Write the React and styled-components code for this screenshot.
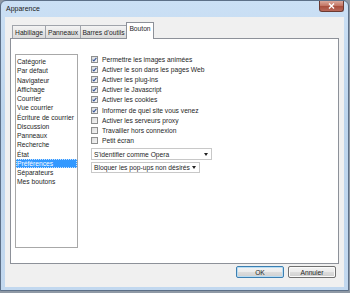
import React from "react";
import styled, { createGlobalStyle, css } from "styled-components";

const Global = createGlobalStyle`
  html, body { margin: 0; padding: 0; }
  body {
    width: 350px; height: 293px; overflow: hidden;
    background: #8f99a5;
    font-family: "Liberation Sans", Arial, sans-serif;
    font-size: 6.7px;
    color: #262626;
  }
`;

const Window = styled.div`
  width: 347px;
  height: 289px;
  border: 1px solid #5d7088;
  border-radius: 6px 6px 0 0;
  background: linear-gradient(180deg, #cbe0f5 0%, #bcd4ec 40%, #c2d8ef 100%);
  display: flex;
  flex-direction: column;
`;

const TitleBar = styled.div`
  height: 16px;
  display: flex;
  align-items: flex-start;
  justify-content: space-between;
  padding-left: 5px;
`;

const Title = styled.span`
  line-height: 16px;
  font-size: 7px;
  color: #1a1a1a;
`;

const CloseBtn = styled.div`
  width: 25px;
  height: 11px;
  margin-right: 4px;
  border: 1px solid #6b3a32;
  border-top: none;
  border-radius: 0 0 3px 3px;
  background: linear-gradient(180deg, #dba99c 0%, #c47767 45%, #a9503f 55%, #b9685a 100%);
  display: flex;
  align-items: center;
  justify-content: center;
  box-sizing: border-box;
`;

const Client = styled.div`
  flex: 1;
  margin: 0 4px 3px 4px;
  background: #f0f0f0;
  display: flex;
  flex-direction: column;
`;

const TabStrip = styled.div`
  display: flex;
  align-items: flex-end;
  height: 16px;
  margin-top: 5px;
  padding-left: 7px;
`;

const Tab = styled.div`
  box-sizing: border-box;
  height: 13px;
  border: 1px solid #a0a4ab;
  border-bottom: none;
  border-right: none;
  background: linear-gradient(180deg, #f4f4f4 0%, #e6e6e6 50%, #dadada 100%);
  display: flex;
  align-items: center;
  justify-content: center;
  white-space: nowrap;
  width: ${(p) => p.$w}px;
  ${(p) =>
    p.$active &&
    css`
      height: 17px;
      margin-bottom: -1px;
      background: #fff;
      border-right: 1px solid #8d9199;
      border-color: #8d9199;
      z-index: 1;
      align-items: flex-start;
      padding-top: 2px;
    `}
`;

const Panel = styled.div`
  margin: 0 5px;
  height: 226px;
  box-sizing: border-box;
  border: 1px solid #8d9199;
  background: #fff;
  padding: 15px 4px;
  display: flex;
  gap: 13px;
`;

const ListBox = styled.div`
  width: 63px;
  height: 194px;
  box-sizing: border-box;
  border: 1px solid #a8a8a8;
  padding: 2px 0 0 0;
`;

const ListItem = styled.div`
  height: 9.25px;
  line-height: 9.25px;
  padding-left: 1px;
  white-space: nowrap;
  box-sizing: border-box;
  ${(p) =>
    p.$selected &&
    css`
      background: #3399ff;
      color: #fff;
      outline: 1px dotted #c9e2ff;
      outline-offset: -1px;
    `}
`;

const Options = styled.div`
  display: flex;
  flex-direction: column;
`;

const CheckRow = styled.label`
  height: 10.2px;
  display: flex;
  align-items: center;
  gap: 4px;
  white-space: nowrap;
`;

const Box = styled.span`
  width: 7px;
  height: 7px;
  box-sizing: border-box;
  border: 1px solid #8e8f8f;
  background: linear-gradient(135deg, #dcdcdc 0%, #f4f4f4 100%);
  display: flex;
  align-items: center;
  justify-content: center;
`;

const Select = styled.div`
  box-sizing: border-box;
  width: ${(p) => p.$w}px;
  height: ${(p) => p.$h}px;
  margin-top: ${(p) => p.$mt}px;
  border: 1px solid #c8c8c8;
  display: flex;
  align-items: center;
  justify-content: space-between;
  padding: 0 3px 0 2px;
  white-space: nowrap;
`;

const Arrow = styled.span`
  width: 0;
  height: 0;
  border-left: 2.5px solid transparent;
  border-right: 2.5px solid transparent;
  border-top: 3px solid #222;
`;

const Footer = styled.div`
  flex: 1;
  display: flex;
  justify-content: flex-end;
  align-items: flex-start;
  padding: 2px 8px 0 0;
  gap: 4px;
`;

const Button = styled.div`
  width: 48px;
  height: 12px;
  box-sizing: border-box;
  border: 1px solid ${(p) => (p.$default ? "#3c7fb1" : "#707070")};
  border-radius: 2px;
  background: linear-gradient(180deg, #f3f3f3 0%, #ebebeb 50%, #dddddd 51%, #cfcfcf 100%);
  box-shadow: ${(p) => (p.$default ? "inset 0 0 0 1px #b8dcf3" : "inset 0 0 0 1px #fafafa")};
  display: flex;
  align-items: center;
  justify-content: center;
`;

const tabs = [
  { label: "Habillage", w: 33 },
  { label: "Panneaux", w: 35 },
  { label: "Barres d'outils", w: 46 },
  { label: "Bouton", w: 28, active: true },
];

const categories = [
  "Catégorie",
  "Par défaut",
  "Navigateur",
  "Affichage",
  "Courrier",
  "Vue courrier",
  "Écriture de courrier",
  "Discussion",
  "Panneaux",
  "Recherche",
  "État",
  "Préférences",
  "Séparateurs",
  "Mes boutons",
];

const options = [
  ["Permettre les images animées", true],
  ["Activer le son dans les pages Web", true],
  ["Activer les plug-ins", true],
  ["Activer le Javascript", true],
  ["Activer les cookies", true],
  ["Informer de quel site vous venez", true],
  ["Activer les serveurs proxy", false],
  ["Travailler hors connexion", false],
  ["Petit écran", false],
];

const Check = () => (
  <svg width="5" height="5" viewBox="0 0 5 5">
    <path d="M0.6 2.6 L1.9 3.9 L4.4 0.8" fill="none" stroke="#3b5a9a" strokeWidth="1.1" />
  </svg>
);

export default function App() {
  return (
    <>
      <Global />
      <Window>
        <TitleBar>
          <Title>Apparence</Title>
          <CloseBtn>
            <svg width="7" height="6" viewBox="0 0 7 6">
              <path d="M1 0.5 L6 5.5 M6 0.5 L1 5.5" stroke="#fff" strokeWidth="1.4" />
            </svg>
          </CloseBtn>
        </TitleBar>
        <Client>
          <TabStrip>
            {tabs.map((t) => (
              <Tab key={t.label} $w={t.w} $active={t.active}>
                {t.label}
              </Tab>
            ))}
          </TabStrip>
          <Panel>
            <ListBox>
              {categories.map((c) => (
                <ListItem key={c} $selected={c === "Préférences"}>
                  {c}
                </ListItem>
              ))}
            </ListBox>
            <Options>
              {options.map(([label, checked]) => (
                <CheckRow key={label}>
                  <Box>{checked && <Check />}</Box>
                  {label}
                </CheckRow>
              ))}
              <Select $w={121} $h={12} $mt={2.5}>
                S'identifier comme Opera
                <Arrow />
              </Select>
              <Select $w={109} $h={10.5} $mt={2}>
                Bloquer les pop-ups non désirés
                <Arrow />
              </Select>
            </Options>
          </Panel>
          <Footer>
            <Button $default>OK</Button>
            <Button>Annuler</Button>
          </Footer>
        </Client>
      </Window>
    </>
  );
}
